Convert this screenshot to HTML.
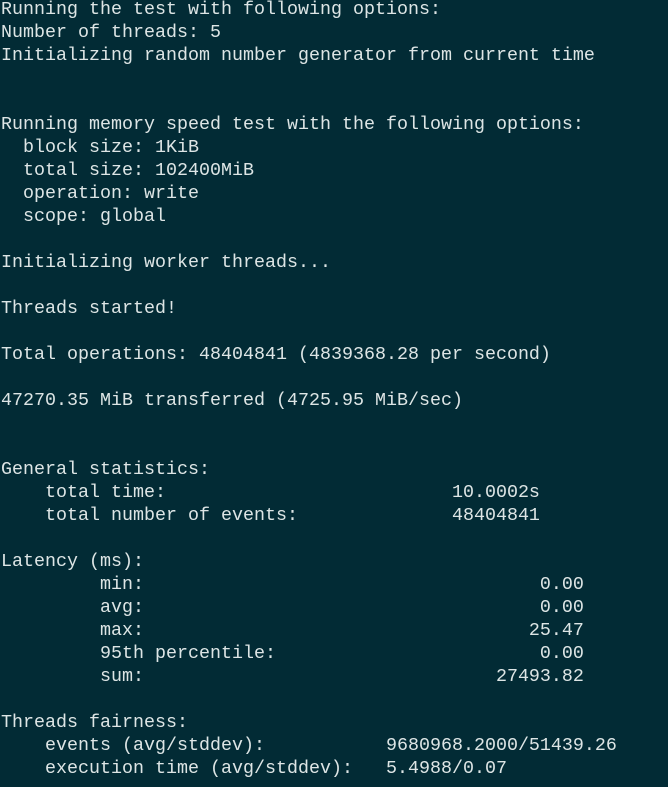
<!DOCTYPE html>
<html><head><meta charset="utf-8"><style>
html,body{margin:0;padding:0;background:#022b35;width:668px;height:787px;overflow:hidden}
pre{margin:-2px 0 0 0;padding:0 0 0 1px;font-family:"Liberation Mono",monospace;font-size:18.33px;line-height:23px;color:#dde5e5}
</style></head><body><pre>Running the test with following options:
Number of threads: 5
Initializing random number generator from current time


Running memory speed test with the following options:
  block size: 1KiB
  total size: 102400MiB
  operation: write
  scope: global

Initializing worker threads...

Threads started!

Total operations: 48404841 (4839368.28 per second)

47270.35 MiB transferred (4725.95 MiB/sec)


General statistics:
    total time:                          10.0002s
    total number of events:              48404841

Latency (ms):
         min:                                    0.00
         avg:                                    0.00
         max:                                   25.47
         95th percentile:                        0.00
         sum:                                27493.82

Threads fairness:
    events (avg/stddev):           9680968.2000/51439.26
    execution time (avg/stddev):   5.4988/0.07
</pre></body></html>
